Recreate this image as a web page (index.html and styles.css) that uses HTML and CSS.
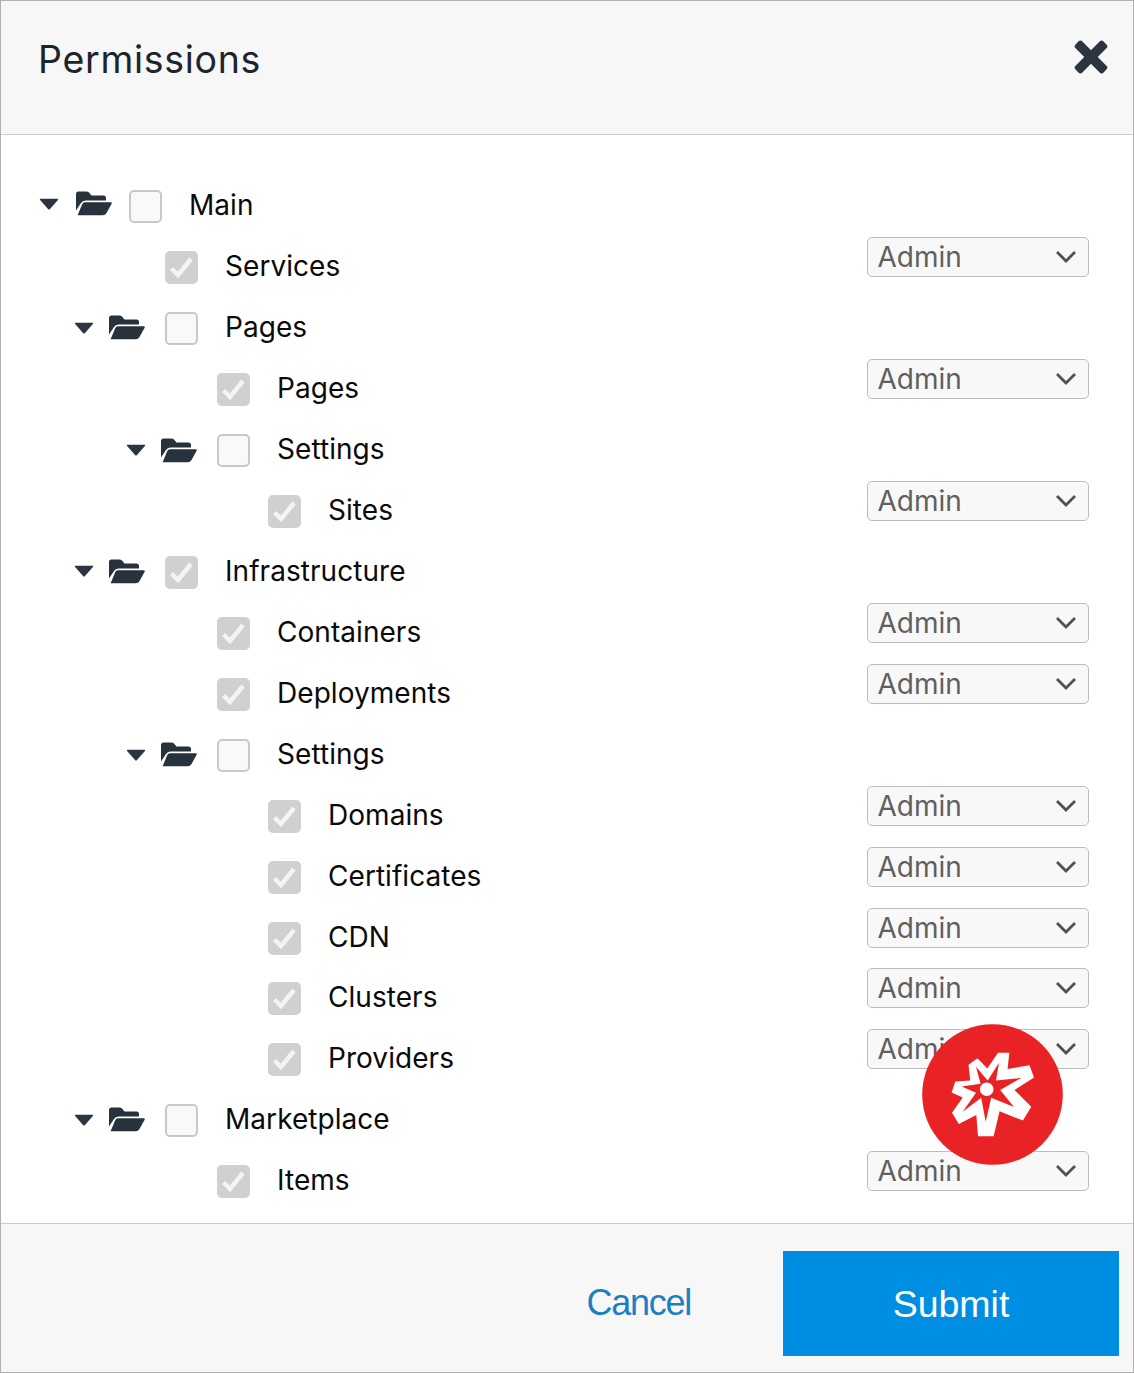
FILE: index.html
```html
<!DOCTYPE html>
<html lang="en">
<head>
<meta charset="utf-8">
<title>Permissions</title>
<link rel="stylesheet" href="styles.css">
</head>
<body>
<svg class="defs" width="0" height="0" aria-hidden="true">
  <symbol id="caret" viewBox="0 0 20 12"><path d="M1.600 .8H18.400Q20 .8 18.900 2.100L11 10.900Q10 11.900 9 10.900L1.100 2.100Q0 .8 1.600 .8Z"/></symbol>
  <symbol id="folder" viewBox="0 0 36 25"><path d="M0 19.500V3Q0 .5 2.500 .5H10.500Q12 .5 13 1.600L15.500 4.500H27.500Q30 4.500 30 7V9.500H9.500Q6.500 9.500 5 12Z"/><path d="M8.800 11.200H34.600Q36.500 11.200 35.500 13L30.500 22Q29.200 24.300 26.800 24.300H1.600L6.300 13Q7.100 11.200 8.800 11.200Z"/></symbol>
  <symbol id="tick" viewBox="0 0 33 33"><path d="M6.500 17.500L13 24L26 8" fill="none" stroke="#f4f4f4" stroke-width="4.500"/></symbol>
  <symbol id="chevron" viewBox="0 0 22 14"><path d="M2 2L11 11L20 2" fill="none" stroke="#505050" stroke-width="2.800"/></symbol>
</svg>
<div class="dialog">
  <header class="header">
    <h1 class="title">Permissions</h1>
    <svg class="close" viewBox="0 0 34 34"><g transform="rotate(45 17 17)"><rect x="-2.800" y="12.200" width="39.600" height="9.600" rx="2.800"/><rect x="12.200" y="-2.800" width="9.600" height="39.600" rx="2.800"/></g></svg>
  </header>
  <main class="tree" id="tree"></main>
  <footer class="footer">
    <a class="cancel">Cancel</a>
    <button class="submit">Submit</button>
  </footer>
  <svg class="badge" viewBox="0 0 141 141">
    <circle cx="70.500" cy="70.500" r="70.300" fill="#e92226"/>
    <path fill="#fff" fill-rule="evenodd" d="M76 28.800L87.300 28.800L85.600 45L107.500 41.300L112 53.500L92.500 66L109.300 82.700L100.900 96.600L77.600 87.300L71.600 112.300H56L54.300 91L36.800 100L30 88.700L40.700 73.600L29.600 68.400L33.300 57.500L48.200 56.500L46.500 40.700L55.500 34.200L65.300 44.500Z
      M77 38.700L65.700 56.500L54 42.700L58.600 59.700L39.700 62.500L54 68.700L40.700 87.700L59.200 73.700L63.700 97.700L69.200 73.700L92 83L78.200 66L99.500 53.800L74 56.600Z"/>
    <circle cx="64.700" cy="65.300" r="6.800" fill="#fff"/>
  </svg>
</div>
<script src="tree.js"></script>
</body>
</html>
```
FILE: tree.js
```js
const rows = [
  ['Main', 0, true, false], ['Services', 1, false, true],
  ['Pages', 1, true, false], ['Pages', 2, false, true],
  ['Settings', 2, true, false], ['Sites', 3, false, true],
  ['Infrastructure', 1, true, true], ['Containers', 2, false, true],
  ['Deployments', 2, false, true], ['Settings', 2, true, false],
  ['Domains', 3, false, true], ['Certificates', 3, false, true],
  ['CDN', 3, false, true], ['Clusters', 3, false, true],
  ['Providers', 3, false, true], ['Marketplace', 1, true, false],
  ['Items', 2, false, true]
];
const icon = (cls, id) => `<svg class="${cls}"><use href="#${id}"/></svg>`;
document.getElementById('tree').innerHTML = rows.map(([label, level, folder, checked]) => `
  <div class="row level-${level}">
    <span class="icons">${folder ? icon('caret', 'caret') + icon('folder', 'folder') : ''}</span>
    <span class="check${checked ? ' checked' : ''}">${checked ? icon('tick', 'tick') : ''}</span>
    <span class="label">${label}</span>
    ${folder ? '' : `<span class="select"><span>Admin</span>${icon('chevron', 'chevron')}</span>`}
  </div>`).join('');
```
FILE: styles.css
```css
* { box-sizing: border-box; }
body { margin: 0; background: #fff; font-family: Inter, sans-serif; }
.defs { position: absolute; }
.dialog { position: relative; display: flex; flex-direction: column; width: 1134px; height: 1373px; border: 1.500px solid #b0b0b0; background: #fff; }
.header { display: flex; justify-content: space-between; align-items: flex-start; height: 134px; padding: 35px 25px 0 37px; background: #f7f7f7; border-bottom: 1px solid #ccc; }
.title { margin: 1px 0 0; font-size: 37.500px; line-height: 46px; font-weight: 400; letter-spacing: 0.700px; color: #1c242c; }
.close { width: 34px; height: 34px; margin-top: 4px; fill: #2b343f; }
.tree { height: 1088px; padding-top: 39.300px; }
.row { display: flex; align-items: center; height: 60.950px; padding-right: 44px; }
.icons { display: flex; align-items: center; justify-content: flex-end; flex: none; }
.level-0 .icons { width: 111px; padding-bottom: 2px; }
.level-1 .icons { width: 144px; padding-top: 2px; }
.level-2 .icons { width: 196px; padding-top: 3px; }
.level-3 .icons { width: 247px; }
.caret { width: 20px; height: 12px; margin-right: 15px; fill: #2b343f; }
.level-0 .caret { margin-right: 17px; }
.folder { width: 36px; height: 25px; fill: #28323d; }
.check { flex: none; width: 33px; height: 33px; margin: 4px 0 0 20px; border: 2px solid #c8c8c8; border-radius: 5px; background: #f9f9f9; }
.level-0 .check { margin-left: 17px; }
.checked { border: 0; background: #d0d0d0; }
.tick { display: block; width: 33px; height: 33px; }
.label { margin: 1px 0 0 27px; font-size: 28px; line-height: 36px; letter-spacing: 0.050px; color: #0a0a0a; }
.select { display: flex; align-items: center; justify-content: space-between; width: 222px; height: 40px; margin: -17px 0 0 auto; padding: 0 11px 0 9.500px; border: 1px solid #bdbdbd; border-radius: 5px; background: #f8f8f8; color: #606060; font-size: 28px; }
.chevron { width: 22px; height: 14px; }
.footer { display: flex; justify-content: flex-end; align-items: center; flex: 1; padding: 0 14px 0 0; background: #f7f7f7; border-top: 1px solid #ccc; font-family: "Liberation Sans", Arial, sans-serif; }
.cancel { margin: 9px 92px 0 0; color: #1a80c4; font-size: 36px; letter-spacing: -1.250px; }
.submit { width: 336px; height: 105px; margin-top: 11px; padding: 2px 0 0; border: 0; background: #008ee2; color: #fff; font: 37.500px "Liberation Sans", Arial, sans-serif; }
.badge { position: absolute; left: 921px; top: 1023px; width: 141px; height: 141px; }
```
